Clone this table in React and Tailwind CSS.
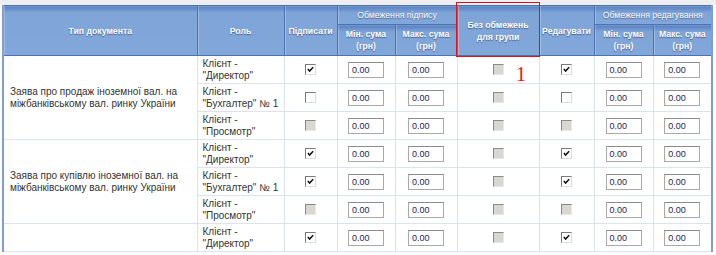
import React from "react";

const HB = "bg-[linear-gradient(to_bottom,#5a80c1_0px,#6a91cc_3px,#7ea4d8_6px,#82a7da_100%)]";
const hcell = `${HB} text-white font-bold text-[8.7px] leading-[12px] text-center align-middle border border-[#4d72b2] [text-shadow:0_1px_1px_rgba(20,40,90,0.55)] shadow-[inset_1px_0_0_rgba(255,255,255,0.25)]`;
const bcell = "border border-[#dde3ec] align-middle";

function Check({ state }) {
  if (state === "d") {
    return (
      <div className="mx-auto w-[11px] h-[11px] border border-t-[#8a8a8a] border-l-[#8a8a8a] border-r-[#e8e8e8] border-b-[#e8e8e8] bg-[#d9d7d2]" />
    );
  }
  return (
    <div className="mx-auto w-[11px] h-[11px] border border-t-[#7a7a7a] border-l-[#7a7a7a] border-r-[#dcdcdc] border-b-[#dcdcdc] bg-white flex items-center justify-center">
      {state === "c" && (
        <svg width="7" height="7" viewBox="0 0 8 8">
          <path d="M1 3.5 L3 5.8 L7 1.5" stroke="#111" strokeWidth="1.7" fill="none" />
        </svg>
      )}
    </div>
  );
}

function Input() {
  return (
    <div className="mx-auto w-[36px] h-[16px] border border-[#a9a9a9] border-t-[#8c8c8c] bg-white text-[9px] leading-[14px] text-[#2a2350] pl-[3px] text-left">
      0.00
    </div>
  );
}

const rows = [
  { doc: ["Заява про продаж іноземної вал. на", "міжбанківському вал. ринку України"], role: ["Клієнт -", "\"Директор\""], s: "c", e: "c" },
  { role: ["Клієнт -", "\"Бухгалтер\" № 1"], s: "u", e: "u" },
  { role: ["Клієнт -", "\"Просмотр\""], s: "d", e: "d" },
  { doc: ["Заява про купівлю іноземної вал. на", "міжбанківському вал. ринку України"], role: ["Клієнт -", "\"Директор\""], s: "c", e: "c" },
  { role: ["Клієнт -", "\"Бухгалтер\" № 1"], s: "c", e: "c" },
  { role: ["Клієнт -", "\"Просмотр\""], s: "d", e: "d" },
  { doc: ["", ""], role: ["Клієнт -", "\"Директор\""], s: "c", e: "c" },
];

export default function App() {
  return (
    <div className="relative w-[716px] h-[255px] overflow-hidden bg-white font-['Liberation_Sans',Arial,sans-serif]">
      <div className="h-[5px] bg-[#eceef1]" />
      <table className="ml-[2px] table-fixed border-collapse w-[709px] border-l-2 border-l-[#7f9fd2] border-r-2 border-r-[#7f9fd2]">
        <colgroup>
          <col className="w-[194px]" />
          <col className="w-[87px]" />
          <col className="w-[53px]" />
          <col className="w-[58px]" />
          <col className="w-[62px]" />
          <col className="w-[82px]" />
          <col className="w-[55px]" />
          <col className="w-[59px]" />
          <col className="w-[59px]" />
        </colgroup>
        <thead>
          <tr className="h-[19px]">
            <th rowSpan={2} className={hcell}>Тип документа</th>
            <th rowSpan={2} className={hcell}>Роль</th>
            <th rowSpan={2} className={hcell}>Підписати</th>
            <th colSpan={2} className={`${hcell} !font-normal`}>Обмеження підпису</th>
            <th rowSpan={2} className={hcell}>Без обмежень<br />для групи</th>
            <th rowSpan={2} className={hcell}>Редагувати</th>
            <th colSpan={2} className={`${hcell} !font-normal`}>Обмеження редагування</th>
          </tr>
          <tr className="h-[31px]">
            <th className={hcell}>Мін. сума<br />(грн)</th>
            <th className={hcell}>Макс. сума<br />(грн)</th>
            <th className={hcell}>Мін. сума<br />(грн)</th>
            <th className={hcell}>Макс. сума<br />(грн)</th>
          </tr>
        </thead>
        <tbody className="text-[10px] leading-[12px] text-[#333]">
          {rows.map((r, i) => (
            <tr key={i} className="h-[28px]">
              {r.doc && (
                <td rowSpan={3} className={`${bcell} pl-[6px]`}>
                  <div>{r.doc[0]}</div>
                  <div>{r.doc[1]}</div>
                </td>
              )}
              <td className={`${bcell} pl-[5px]`}>
                <div>{r.role[0]}</div>
                <div>{r.role[1]}</div>
              </td>
              <td className={bcell}><Check state={r.s} /></td>
              <td className={bcell}><Input /></td>
              <td className={bcell}><Input /></td>
              <td className={bcell}><Check state="d" /></td>
              <td className={bcell}><Check state={r.e} /></td>
              <td className={bcell}><Input /></td>
              <td className={bcell}><Input /></td>
            </tr>
          ))}
        </tbody>
      </table>
      <div className="absolute left-[456px] top-[2px] w-[84px] h-[55px] border border-[#e81010]" />
      <div className="absolute left-[516px] top-[64px] text-[#e81010] text-[20px] leading-[20px] font-['Liberation_Serif',serif]">1</div>
    </div>
  );
}
